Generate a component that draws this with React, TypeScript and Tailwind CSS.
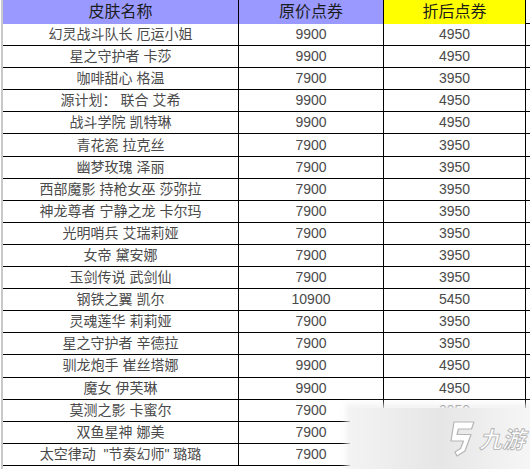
import React from 'react';

const rows: [string, string, string][] = [
  ['幻灵战斗队长 厄运小姐', '9900', '4950'],
  ['星之守护者 卡莎', '9900', '4950'],
  ['咖啡甜心 格温', '7900', '3950'],
  ['源计划： 联合 艾希', '9900', '4950'],
  ['战斗学院 凯特琳', '9900', '4950'],
  ['青花瓷 拉克丝', '7900', '3950'],
  ['幽梦玫瑰 泽丽', '7900', '3950'],
  ['西部魔影 持枪女巫 莎弥拉', '7900', '3950'],
  ['神龙尊者 宁静之龙 卡尔玛', '7900', '3950'],
  ['光明哨兵 艾瑞莉娅', '7900', '3950'],
  ['女帝 黛安娜', '7900', '3950'],
  ['玉剑传说 武剑仙', '7900', '3950'],
  ['钢铁之翼 凯尔', '10900', '5450'],
  ['灵魂莲华 莉莉娅', '7900', '3950'],
  ['星之守护者 辛德拉', '7900', '3950'],
  ['驯龙炮手 崔丝塔娜', '9900', '4950'],
  ['魔女 伊芙琳', '9900', '4950'],
  ['莫测之影 卡蜜尔', '7900', '3950'],
  ['双鱼星神 娜美', '7900', '3950'],
  ['太空律动  "节奏幻师" 璐璐', '7900', '3950'],
];

const cols = 'grid grid-cols-[236px_145px_142px]';
const cell = 'flex items-center justify-center border-r border-black whitespace-pre';

export default function App() {
  return (
    <div className="relative h-[469px] w-[530px] overflow-hidden bg-white font-['Liberation_Sans','Noto_Sans_CJK_SC',sans-serif]">
      <div className="ml-px h-full border-l-2 border-[#c9c9c9]">
        <div className={`${cols} h-[24px] border-b border-black text-[16px] text-[#1c1c1c]`}>
          <div className={`${cell} bg-[#9999ff]`}>皮肤名称</div>
          <div className={`${cell} bg-[#9999ff]`}>原价点券</div>
          <div className={`${cell} bg-[#ffff00]`}>折后点券</div>
        </div>
        {rows.map(([name, orig, sale]) => (
          <div key={name} className={`${cols} h-[22.1px] border-b border-black text-[14px] text-[#4a4a4a]`}>
            <div className={cell}>{name}</div>
            <div className={cell}>{orig}</div>
            <div className={cell}>{sale}</div>
          </div>
        ))}
      </div>

      {/* watermark */}
      <div className="absolute left-[350px] top-[408px] flex h-[61px] w-[180px] items-center gap-[4px] bg-gradient-to-r from-[#f3f3f3] via-[#e6e6e6] to-[#f6f6f6] pl-[95px] shadow-[0_0_6px_4px_rgba(240,240,240,0.85)]">
        <svg width="30" height="36" viewBox="0 0 30 36" className="shrink-0">
          <path d="M9 1 L29 1 L26.5 8 L13.5 8 L12 13.5 L26 13.5 L20 30 L12 35 L10 31 L15.5 27.5 L18.5 20 L6 20 Z" fill="#ffffff" stroke="#b5b5b5" strokeWidth="1.2" strokeLinejoin="round" />
        </svg>
        <span className="shrink-0 whitespace-nowrap font-['Noto_Sans_CJK_SC',sans-serif] text-[23px] font-bold italic leading-none text-white [-webkit-text-stroke:0.8px_#b0b0b0]">九游</span>
      </div>
    </div>
  );
}
